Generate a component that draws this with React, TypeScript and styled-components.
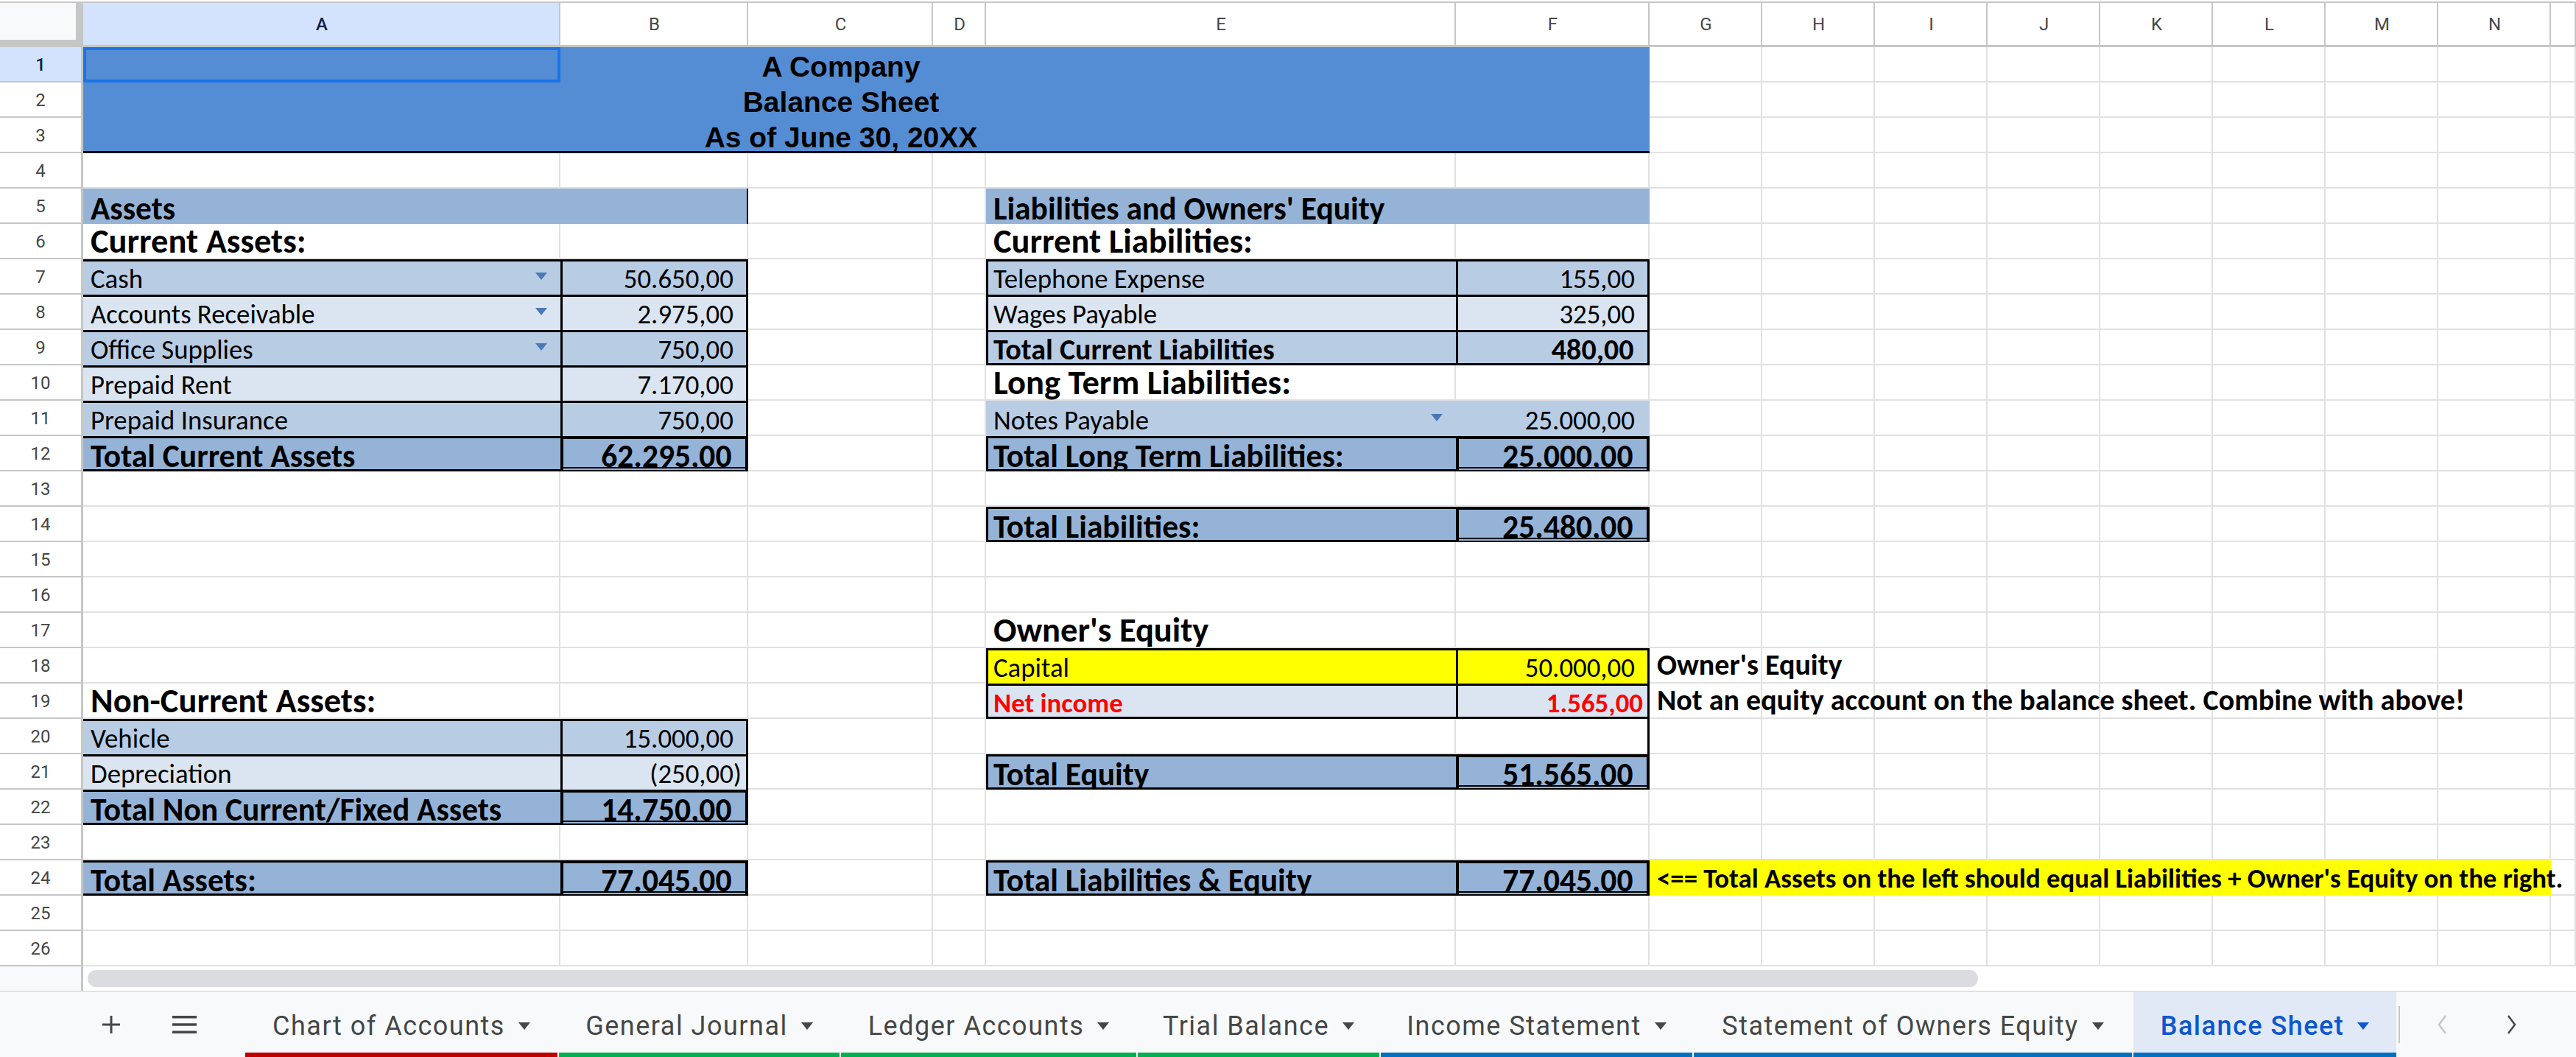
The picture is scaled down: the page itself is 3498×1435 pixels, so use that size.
import React from 'react';
import styled, { createGlobalStyle } from 'styled-components';

type Sz = 'n' | 'nb' | 'b12' | 'g12' | 'h13' | 'h14' | 'note' | 'title';

interface Spec {
  v?: string;
  fill?: string;
  sz?: Sz;
  color?: string;
  align?: 'l' | 'r' | 'c';
  bt?: number;
  br?: number;
  bb?: number;
  bl?: number;
  dbl?: boolean;
  drop?: boolean;
  over?: boolean;
  pad?: boolean;
  sel?: boolean;
}

const CAL = 'Carlito, Calibri, Lato, sans-serif';
const ARIAL = '"Liberation Sans", Arial, sans-serif';

const FONT: Record<Sz, { f: string; s: number; w: number; pb: number }> = {
  n: { f: CAL, s: 36.8, w: 400, pb: 3 },
  nb: { f: CAL, s: 36.8, w: 700, pb: 3 },
  b12: { f: CAL, s: 40, w: 700, pb: 2 },
  g12: { f: CAL, s: 40, w: 700, pb: 6 },
  h13: { f: CAL, s: 43.5, w: 700, pb: 0 },
  h14: { f: CAL, s: 46.5, w: 700, pb: 3 },
  note: { f: CAL, s: 36.8, w: 700, pb: 5 },
  title: { f: ARIAL, s: 39, w: 700, pb: 3 },
};

const COLS = 'ABCDEFGHIJKLMNO'.split('');
const ROWS = Array.from({ length: 26 }, (_, i) => i + 1);
const HEAD = '#548dd4';
const DARK = '#95b3d7';
const MID = '#b8cce4';
const LIGHT = '#dbe5f1';
const YEL = '#ffff00';
const RED = '#ff0000';

const cells: Record<string, Spec> = {};
const set = (k: string, s: Spec) => {
  cells[k] = { ...(cells[k] || {}), ...s };
};
const label = (k: string, v: string, fill?: string, sz: Sz = 'n', extra: Spec = {}) =>
  set(k, { v, fill, sz, ...extra });
const num = (k: string, v: string, fill?: string, sz: Sz = 'n', extra: Spec = {}) =>
  set(k, { v, fill, sz, align: 'r', pad: true, ...extra });

// Title block
for (let r = 1; r <= 3; r++) for (const c of 'ABCDEF') set(`${c}${r}`, { fill: HEAD, bb: r === 3 ? 3 : 0 });
set('A1', { sel: true });
set('C1', { v: 'A Company', sz: 'title', align: 'c', over: true });
set('C2', { v: 'Balance Sheet', sz: 'title', align: 'c', over: true });
set('C3', { v: 'As of June 30, 20XX', sz: 'title', align: 'c', over: true });

const T = { bt: 3 };
const TL = { bt: 3, bl: 3 };
const TLR = { bt: 3, bl: 3, br: 3 };
const BOX = { bt: 4, bl: 4, br: 4, dbl: true };

// Assets side
label('A5', 'Assets', DARK, 'h13');
set('B5', { fill: DARK, br: 2 });
label('A6', 'Current Assets:', undefined, 'h14');
label('A7', 'Cash', MID, 'n', { ...T, drop: true });
num('B7', '50.650,00', MID, 'n', TLR);
label('A8', 'Accounts Receivable', LIGHT, 'n', { ...T, drop: true });
num('B8', '2.975,00', LIGHT, 'n', TLR);
label('A9', 'Office Supplies', MID, 'n', { ...T, drop: true });
num('B9', '750,00', MID, 'n', TLR);
label('A10', 'Prepaid Rent', LIGHT, 'n', T);
num('B10', '7.170,00', LIGHT, 'n', TLR);
label('A11', 'Prepaid Insurance', MID, 'n', T);
num('B11', '750,00', MID, 'n', TLR);
label('A12', 'Total Current Assets', DARK, 'h13', { ...T, bb: 3 });
num('B12', '62.295,00', DARK, 'h13', BOX);

label('A19', 'Non-Current Assets:', undefined, 'h14');
label('A20', 'Vehicle', MID, 'n', T);
num('B20', '15.000,00', MID, 'n', TLR);
label('A21', 'Depreciation', LIGHT, 'n', T);
set('B21', { v: '(250,00)', fill: LIGHT, sz: 'n', align: 'r', ...TLR });
label('A22', 'Total Non Current/Fixed Assets', DARK, 'h13', { ...T, bb: 3 });
num('B22', '14.750,00', DARK, 'h13', BOX);
label('A24', 'Total Assets:', DARK, 'h13', { ...T, bb: 3 });
num('B24', '77.045,00', DARK, 'h13', BOX);

// Liabilities side
label('E5', "Liabilities and Owners' Equity", DARK, 'h13');
set('F5', { fill: DARK });
label('E6', 'Current Liabilities:', undefined, 'h14');
label('E7', 'Telephone Expense', MID, 'n', TL);
num('F7', '155,00', MID, 'n', TLR);
label('E8', 'Wages Payable', LIGHT, 'n', TL);
num('F8', '325,00', LIGHT, 'n', TLR);
label('E9', 'Total Current Liabilities', MID, 'b12', { ...TL, bb: 3 });
num('F9', '480,00', MID, 'b12', { ...TLR, bb: 3 });
label('E10', 'Long Term Liabilities:', undefined, 'h14');
label('E11', 'Notes Payable', MID, 'n', { drop: true });
num('F11', '25.000,00', MID, 'n');
label('E12', 'Total Long Term Liabilities:', DARK, 'h13', { ...TL, bb: 3 });
num('F12', '25.000,00', DARK, 'h13', BOX);
label('E14', 'Total Liabilities:', DARK, 'h13', { ...TL, bb: 3 });
num('F14', '25.480,00', DARK, 'h13', BOX);

label('E17', "Owner's Equity", undefined, 'h14');
label('E18', 'Capital', YEL, 'n', TL);
num('F18', '50.000,00', YEL, 'n', TLR);
label('G18', "Owner's Equity", undefined, 'g12', { over: true });
label('E19', 'Net income', LIGHT, 'nb', { ...TL, bb: 3, color: RED });
set('F19', { v: '1.565,00', fill: LIGHT, sz: 'nb', align: 'r', color: RED, ...TLR, bb: 3 });
label('G19', 'Not an equity account on the balance sheet. Combine with above!', undefined, 'g12', { over: true });
set('F20', { br: 3 });
label('E21', 'Total Equity', DARK, 'h13', { ...TL, bb: 3 });
num('F21', '51.565,00', DARK, 'h13', BOX);
label('E24', 'Total Liabilities & Equity', DARK, 'h13', { ...TL, bb: 3 });
num('F24', '77.045,00', DARK, 'h13', BOX);
for (const c of 'GHIJKLMN') set(`${c}24`, { fill: YEL });
set('G24', {
  v: "<== Total Assets on the left should equal Liabilities + Owner's Equity on the right.",
  sz: 'note',
  over: true,
});

function lines(s: Spec): string {
  const out: string[] = [];
  if (s.sel) out.push('inset 0 0 0 4px #1a73e8');
  if (s.bt) out.push(`inset 0 ${s.bt}px 0 #000`);
  if (s.bl) out.push(`inset ${s.bl}px 0 0 #000`);
  if (s.br) out.push(`inset -${s.br}px 0 0 #000`);
  if (s.bb) out.push(`inset 0 -${s.bb}px 0 #000`);
  if (s.dbl) out.push('inset 0 -2px 0 #000', `inset 0 -4px 0 ${s.fill || '#fff'}`, 'inset 0 -6px 0 #000');
  return out.length ? out.join(', ') : 'none';
}

const GlobalStyle = createGlobalStyle`
  html, body { margin: 0; padding: 0; background: #fff; }
  body { width: 3498px; height: 1435px; overflow: hidden; font-family: Roboto, "Liberation Sans", sans-serif; }
  #root { width: 3498px; height: 1435px; }
`;

const Page = styled.div`
  display: flex;
  flex-direction: column;
  width: 3498px;
  height: 1435px;
  background: #fff;
`;

const Sheet = styled.div`
  display: grid;
  grid-template-columns: 113px 648px 255px 251px 72px 638px 263px repeat(8, 153px) 1fr;
  grid-template-rows: 60px repeat(26, 48px);
  margin-top: 2px;
  border-top: 2px solid #c7c7c7;
`;

const Corner = styled.div`
  background: #f8f9fa;
  box-shadow: inset -10px -10px 0 #c4c7c5;
`;

const ColHead = styled.div<{ $sel: boolean }>`
  display: flex;
  align-items: center;
  justify-content: center;
  background: ${(p) => (p.$sel ? '#d3e3fd' : '#fff')};
  box-shadow: inset -2px -3px 0 #c4c7c5;
  font-family: Roboto, "Liberation Sans", sans-serif;
  font-size: 24px;
  color: ${(p) => (p.$sel ? '#0b1f44' : '#444746')};
  font-weight: ${(p) => (p.$sel ? 500 : 400)};
  padding-bottom: 2px;
`;

const RowHead = styled.div<{ $sel: boolean }>`
  display: flex;
  align-items: center;
  justify-content: center;
  background: ${(p) => (p.$sel ? '#d3e3fd' : '#fff')};
  box-shadow: inset -3px -2px 0 #c4c7c5;
  font-family: Roboto, "Liberation Sans", sans-serif;
  font-size: 24px;
  color: ${(p) => (p.$sel ? '#0b1f44' : '#444746')};
  font-weight: ${(p) => (p.$sel ? 500 : 400)};
  padding-right: 3px;
`;

const CellBox = styled.div<{ $fill?: string; $align: string; $over: boolean; $pb: number; $lines: string }>`
  position: relative;
  z-index: ${(p) => (p.$over ? 1 : 'auto')};
  display: flex;
  align-items: flex-end;
  justify-content: ${(p) => (p.$align === 'r' ? 'flex-end' : p.$align === 'c' ? 'center' : 'flex-start')};
  min-width: 0;
  padding: 0 9px ${(p) => p.$pb}px 10px;
  background: ${(p) => p.$fill ?? '#fff'};
  box-shadow: ${(p) => (p.$fill ? 'none' : 'inset -2px -2px 0 #e1e1e1')};
  white-space: nowrap;
  &::after {
    content: '';
    position: absolute;
    inset: 0;
    pointer-events: none;
    box-shadow: ${(p) => p.$lines};
  }
`;

const CellText = styled.span<{ $font: string; $size: number; $weight: number; $color?: string }>`
  font-family: ${(p) => p.$font};
  font-size: ${(p) => p.$size}px;
  font-weight: ${(p) => p.$weight};
  color: ${(p) => p.$color ?? '#000'};
  line-height: 0.95;
  white-space: nowrap;
`;

const Pad = styled.span`
  visibility: hidden;
`;

const DropArrow = styled.span`
  position: absolute;
  right: 18px;
  top: 18px;
  width: 0;
  height: 0;
  border-left: 8px solid transparent;
  border-right: 8px solid transparent;
  border-top: 10px solid #4a78b8;
`;

function Cell({ spec }: { spec: Spec }) {
  const f = FONT[spec.sz || 'n'];
  return (
    <CellBox $fill={spec.fill} $align={spec.align || 'l'} $over={!!spec.over} $pb={f.pb} $lines={lines(spec)}>
      {spec.v && (
        <CellText $font={f.f} $size={f.s} $weight={f.w} $color={spec.color}>
          {spec.v}
          {spec.pad && <Pad>)</Pad>}
        </CellText>
      )}
      {spec.drop && <DropArrow />}
    </CellBox>
  );
}

const ScrollStrip = styled.div`
  display: flex;
  height: 33px;
`;

const ScrollCorner = styled.div`
  width: 113px;
  background: #f8f9fa;
  box-shadow: inset -3px 0 0 #c4c7c5;
`;

const Track = styled.div`
  flex: 1;
  display: flex;
  align-items: center;
  padding-left: 6px;
`;

const Thumb = styled.div`
  width: 2567px;
  height: 23px;
  border-radius: 12px;
  background: #dadce0;
`;

const TabBar = styled.div`
  display: flex;
  align-items: stretch;
  height: 88px;
  border-top: 2px solid #e1e1e1;
  background: #f8f9fa;
  padding-left: 137px;
`;

const IconSlot = styled.div<{ $ml: number; $w: number }>`
  display: flex;
  align-items: center;
  justify-content: center;
  width: ${(p) => p.$w}px;
  margin-left: ${(p) => p.$ml}px;
  color: #444746;
`;

const Tab = styled.div<{ $w: number; $line: string; $active?: boolean }>`
  display: flex;
  align-items: center;
  justify-content: center;
  gap: 18px;
  width: ${(p) => p.$w}px;
  margin-right: 2px;
  padding-top: 4px;
  background: ${(p) => (p.$active ? '#e1e9f7' : 'transparent')};
  box-shadow: inset 0 -6px 0 ${(p) => p.$line};
  color: ${(p) => (p.$active ? '#0b57d0' : '#444746')};
  font-family: Roboto, "Liberation Sans", sans-serif;
  font-size: 36px;
  letter-spacing: 1.5px;
  font-weight: ${(p) => (p.$active ? 500 : 400)};
  white-space: nowrap;
  &:first-of-type {
    margin-left: 66px;
  }
`;

const TabArrow = styled.span`
  width: 0;
  height: 0;
  border-left: 8px solid transparent;
  border-right: 8px solid transparent;
  border-top: 10px solid currentColor;
`;

const Divider = styled.div`
  align-self: center;
  width: 2px;
  height: 50px;
  margin-left: 1px;
  background: #c4c7c5;
`;

const TABS = [
  { name: 'Chart of Accounts', w: 424, c: '#c00000' },
  { name: 'General Journal', w: 381, c: '#00b050' },
  { name: 'Ledger Accounts', w: 401, c: '#00b050' },
  { name: 'Trial Balance', w: 328, c: '#00b050' },
  { name: 'Income Statement', w: 423, c: '#0070c0' },
  { name: 'Statement of Owners Equity', w: 595, c: '#0070c0' },
  { name: 'Balance Sheet', w: 357, c: '#0070c0', active: true },
];

const TabList = styled.div`
  display: flex;
  align-items: stretch;
`;

export default function App() {
  return (
    <Page>
      <GlobalStyle />
      <Sheet>
        <Corner />
        {COLS.map((c) => (
          <ColHead key={c} $sel={c === 'A'}>
            {c === 'O' ? '' : c}
          </ColHead>
        ))}
        {ROWS.map((r) => (
          <React.Fragment key={r}>
            <RowHead $sel={r === 1}>{r}</RowHead>
            {COLS.map((c) => (
              <Cell key={c + r} spec={cells[c + r] || {}} />
            ))}
          </React.Fragment>
        ))}
      </Sheet>
      <ScrollStrip>
        <ScrollCorner />
        <Track>
          <Thumb />
        </Track>
      </ScrollStrip>
      <TabBar>
        <IconSlot $ml={0} $w={28}>
          <svg width="28" height="28" viewBox="0 0 28 28">
            <path d="M14 2v24M2 14h24" stroke="#444746" strokeWidth="3" />
          </svg>
        </IconSlot>
        <IconSlot $ml={69} $w={33}>
          <svg width="33" height="26" viewBox="0 0 33 26">
            <rect x="0" y="1" width="33" height="3.5" fill="#444746" />
            <rect x="0" y="11.25" width="33" height="3.5" fill="#444746" />
            <rect x="0" y="21.5" width="33" height="3.5" fill="#444746" />
          </svg>
        </IconSlot>
        <TabList>
          {TABS.map((t) => (
            <Tab key={t.name} $w={t.w} $line={t.c} $active={t.active}>
              <span>{t.name}</span>
              <TabArrow />
            </Tab>
          ))}
        </TabList>
        <Divider />
        <IconSlot $ml={50} $w={14}>
          <svg width="14" height="28" viewBox="0 0 14 28">
            <polyline points="12,2 3,14 12,26" fill="none" stroke="#c4c7c5" strokeWidth="2.5" />
          </svg>
        </IconSlot>
        <IconSlot $ml={81} $w={14}>
          <svg width="14" height="28" viewBox="0 0 14 28">
            <polyline points="2,2 11,14 2,26" fill="none" stroke="#444746" strokeWidth="2.5" />
          </svg>
        </IconSlot>
      </TabBar>
    </Page>
  );
}
